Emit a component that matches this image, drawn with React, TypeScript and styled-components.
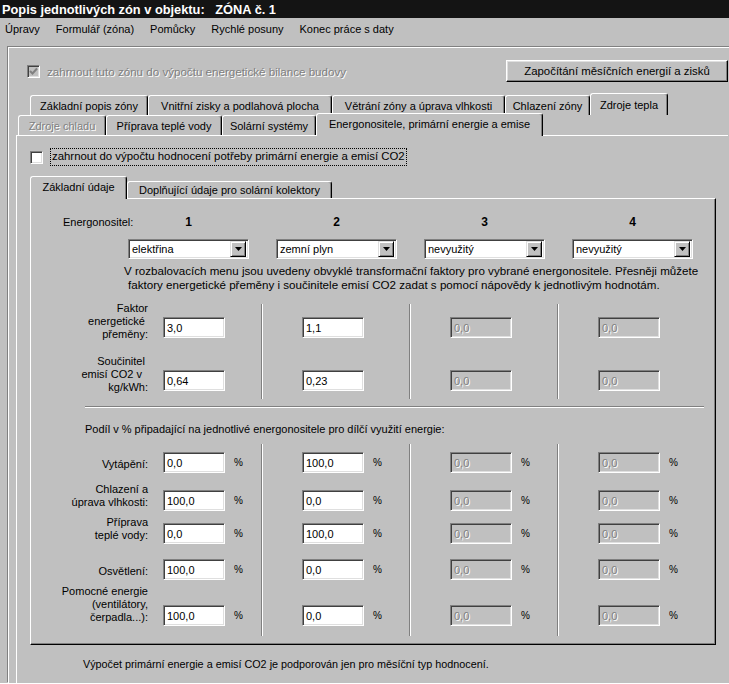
import React from "react";
import styled, { createGlobalStyle, css } from "styled-components";

const GlobalStyle = createGlobalStyle`
  html, body {
    margin: 0;
    padding: 0;
    background: #c0c0c0;
  }
  body {
    font-family: "Liberation Sans", Arial, sans-serif;
    font-size: 11px;
    color: #000;
  }
`;

const sunken = css`
  border: 1px solid;
  border-color: #808080 #ffffff #ffffff #808080;
  box-shadow: inset 1px 1px 0 #404040, inset -1px -1px 0 #dfdfdf;
`;

const raised = css`
  border: 1px solid;
  border-color: #ffffff #000000 #000000 #ffffff;
  box-shadow: inset -1px -1px 0 #808080, inset 1px 1px 0 #dfdfdf;
`;

const disabledText = css`
  color: #808080;
  text-shadow: 1px 1px 0 #ffffff;
`;

const Window = styled.div`
  width: 729px;
  height: 684px;
  overflow: hidden;
  background: #c0c0c0;
  box-shadow: inset 0 -1px 0 #fff;
  display: flex;
  flex-direction: column;
`;

const TitleBar = styled.div`
  height: 18px;
  flex-shrink: 0;
  background: #141414;
  color: #fff;
  font-weight: bold;
  font-size: 12.8px;
  display: flex;
  align-items: center;
  padding-left: 2px;
  white-space: pre;
`;

const MenuBar = styled.div`
  height: 21px;
  flex-shrink: 0;
  display: flex;
  align-items: center;
  gap: 16px;
  padding-left: 5px;
`;

const Frame = styled.div`
  flex: 1;
  margin: 8px -12px 1px 8px;
  border-top: 1px solid #fff;
  border-left: 1px solid #fff;
  box-shadow: -1px -1px 0 #808080;
  padding: 12px 13px 0 7px;
  display: flex;
  flex-direction: column;
`;

const TopRow = styled.div`
  height: 22px;
  display: flex;
  align-items: center;
  padding-left: 11px;
`;

const CheckRow = styled.label<{ $disabled?: boolean; $size?: number }>`
  display: flex;
  align-items: center;
  gap: 7px;
  font-size: ${(p) => p.$size ?? 11}px;
  ${(p) => p.$disabled && disabledText}
`;

const Box = styled.span<{ $disabled?: boolean }>`
  box-sizing: border-box;
  width: 13px;
  height: 13px;
  ${sunken};
  background: ${(p) => (p.$disabled ? "#c0c0c0" : "#fff")};
  display: flex;
  align-items: center;
  justify-content: center;
  text-shadow: none;
`;

const FocusText = styled.span`
  border: 1px dotted #000;
  padding: 1px 1px 2px;
  line-height: 13px;
`;

const Button = styled.div`
  box-sizing: border-box;
  margin-left: auto;
  width: 222px;
  height: 22px;
  ${raised};
  display: flex;
  align-items: center;
  justify-content: center;
  font-size: 11.4px;
`;

const TabStrip = styled.div<{ $gap?: number }>`
  margin-top: ${(p) => p.$gap ?? 0}px;
  display: flex;
  flex-direction: column;
`;

const TabRow = styled.div<{ $indent: number; $h: number }>`
  display: flex;
  align-items: flex-end;
  height: ${(p) => p.$h}px;
  padding-left: ${(p) => p.$indent}px;
`;

const Tab = styled.div<{ $w: number; $h: number; $active?: boolean; $disabled?: boolean }>`
  box-sizing: border-box;
  width: ${(p) => p.$w}px;
  height: ${(p) => p.$h}px;
  margin-bottom: ${(p) => (p.$active ? -1 : 0)}px;
  border-top: 1px solid #fff;
  border-left: 1px solid #fff;
  border-right: 1px solid #000;
  box-shadow: inset -1px 0 0 #808080;
  border-radius: 3px 3px 0 0;
  background: #c0c0c0;
  display: flex;
  align-items: center;
  justify-content: center;
  white-space: nowrap;
  position: relative;
  z-index: ${(p) => (p.$active ? 2 : 1)};
  padding-bottom: ${(p) => (p.$active ? 2 : 0)}px;
  ${(p) => p.$disabled && disabledText}
`;

const TabPanel = styled.div`
  flex: 1;
  border-top: 1px solid #fff;
  border-left: 1px solid #fff;
  padding: 12px 0 0 13px;
  display: flex;
  flex-direction: column;
`;

const InnerPanel = styled.div`
  box-sizing: border-box;
  width: 686px;
  border-top: 1px solid #fff;
  border-left: 1px solid #fff;
  border-right: 1px solid #000;
  border-bottom: 1px solid #000;
  box-shadow: inset -1px -1px 0 #808080;
  padding: 17px 0 18px;
  display: flex;
  flex-direction: column;
`;

const ColumnsRow = styled.div<{ $gap?: number }>`
  display: grid;
  grid-template-columns: 70px repeat(4, 121px);
  column-gap: 27px;
  margin-top: ${(p) => p.$gap ?? 0}px;
  align-items: center;
`;

const RowCaption = styled.div`
  padding-left: 32px;
  white-space: nowrap;
  line-height: 13px;
`;

const ColumnHead = styled.div`
  text-align: center;
  font-weight: bold;
  font-size: 12px;
  line-height: 13px;
`;

const Select = styled.div`
  box-sizing: border-box;
  height: 20px;
  ${sunken};
  background: #fff;
  display: flex;
  align-items: center;
  padding: 2px;
`;

const SelectText = styled.span`
  flex: 1;
  padding-left: 1px;
`;

const SelectButton = styled.span`
  box-sizing: border-box;
  width: 16px;
  height: 16px;
  background: #c0c0c0;
  border: 1px solid;
  border-color: #dfdfdf #000 #000 #dfdfdf;
  box-shadow: inset 1px 1px 0 #fff, inset -1px -1px 0 #808080;
  display: flex;
  align-items: center;
  justify-content: center;
`;

const Note = styled.div<{ $indent: number; $gap: number; $size?: number }>`
  padding-left: ${(p) => p.$indent}px;
  margin-top: ${(p) => p.$gap}px;
  font-size: ${(p) => p.$size ?? 11}px;
  line-height: 14px;
  white-space: nowrap;
`;

const NoteLine = styled.div<{ $indent?: number }>`
  padding-left: ${(p) => p.$indent ?? 0}px;
`;

const ValueGrid = styled.div<{ $rows: string; $gap: number }>`
  display: grid;
  grid-template-columns: 132px 98px 2px 146px 2px 146px 2px 146px;
  grid-template-rows: ${(p) => p.$rows};
  align-items: end;
  margin-top: ${(p) => p.$gap}px;
`;

const RowLabel = styled.div<{ $row: number; $drop: number }>`
  grid-column: 1;
  grid-row: ${(p) => p.$row};
  text-align: right;
  padding-right: 15px;
  line-height: 13px;
  margin-bottom: ${(p) => p.$drop}px;
`;

const ValueCell = styled.div<{ $row: number; $col: number }>`
  grid-column: ${(p) => p.$col};
  grid-row: ${(p) => p.$row};
  display: flex;
  align-items: center;
  padding-left: ${(p) => (p.$col === 2 ? 0 : 39)}px;
`;

const Field = styled.div<{ $disabled?: boolean }>`
  box-sizing: border-box;
  width: 62px;
  height: 21px;
  ${sunken};
  background: ${(p) => (p.$disabled ? "#c0c0c0" : "#fff")};
  padding: 0 0 0 3px;
  display: flex;
  align-items: center;
  ${(p) => p.$disabled && disabledText}
`;

const Unit = styled.span`
  margin-left: 9px;
  font-size: 10px;
`;

const VSep = styled.div<{ $col: number; $span: number; $top: number; $bottom: number }>`
  grid-column: ${(p) => p.$col};
  grid-row: 1 / span ${(p) => p.$span};
  align-self: stretch;
  border-left: 1px solid #808080;
  border-right: 1px solid #fff;
  margin: ${(p) => p.$top}px 0 ${(p) => -p.$bottom}px;
  width: 0;
`;

const HSep = styled.div`
  margin: 15px 11px 0 54px;
  border-top: 1px solid #808080;
  border-bottom: 1px solid #fff;
`;

const Arrow = () => (
  <svg width="7" height="4" viewBox="0 0 7 4">
    <polygon points="0,0 7,0 3.5,4" fill="#000" />
  </svg>
);

const Tick = () => (
  <svg width="9" height="9" viewBox="0 0 9 9">
    <polyline points="1,4 3.5,6.5 8,1.5" fill="none" stroke="#808080" strokeWidth="2" />
  </svg>
);

type Row = { label: string[]; values: string[] };

const factorRows: Row[] = [
  { label: ["Faktor", "energetické\u00a0", "přeměny:"], values: ["3,0", "1,1", "0,0", "0,0"] },
  { label: ["Součinitel\u00a0", "emisí CO2 v\u00a0\u00a0", "kg/kWh:"], values: ["0,64", "0,23", "0,0", "0,0"] },
];

const percentRows: Row[] = [
  { label: ["Vytápění:"], values: ["0,0", "100,0", "0,0", "0,0"] },
  { label: ["Chlazení a", "úprava vlhkosti:"], values: ["100,0", "0,0", "0,0", "0,0"] },
  { label: ["Příprava", "teplé vody:"], values: ["0,0", "100,0", "0,0", "0,0"] },
  { label: ["Osvětlení:"], values: ["100,0", "0,0", "0,0", "0,0"] },
  { label: ["Pomocné energie", "(ventilátory,", "čerpadla...):"], values: ["100,0", "0,0", "0,0", "0,0"] },
];

const carriers = ["elektřina", "zemní plyn", "nevyužitý", "nevyužitý"];

const ValueRows = ({ rows, unit, drop }: { rows: Row[]; unit?: string; drop: number }) => (
  <>
    {rows.map((r, i) => (
      <React.Fragment key={i}>
        <RowLabel $row={i + 1} $drop={drop}>
          {r.label.map((l, j) => (
            <div key={j}>{l}</div>
          ))}
        </RowLabel>
        {r.values.map((v, c) => (
          <ValueCell key={c} $row={i + 1} $col={2 + c * 2}>
            <Field $disabled={c > 1}>{v}</Field>
            {unit && <Unit>{unit}</Unit>}
          </ValueCell>
        ))}
      </React.Fragment>
    ))}
  </>
);

const App = () => {
  return (
    <>
      <GlobalStyle />
      <Window>
        <TitleBar>{"Popis jednotlivých zón v objektu:   ZÓNA č. 1"}</TitleBar>
        <MenuBar>
          <span>Úpravy</span>
          <span>Formulář (zóna)</span>
          <span>Pomůcky</span>
          <span>Rychlé posuny</span>
          <span>Konec práce s daty</span>
        </MenuBar>

        <Frame>
          <TopRow>
            <CheckRow $disabled $size={11.6}>
              <Box $disabled>
                <Tick />
              </Box>
              zahrnout tuto zónu do výpočtu energetické bilance budovy
            </CheckRow>
            <Button>Započítání měsíčních energií a zisků</Button>
          </TopRow>

          <TabStrip $gap={13}>
            <TabRow $indent={14} $h={20}>
              <Tab $w={118} $h={20}>Základní popis zóny</Tab>
              <Tab $w={184} $h={20}>Vnitřní zisky a podlahová plocha</Tab>
              <Tab $w={173} $h={20}>Větrání zóny a úprava vlhkosti</Tab>
              <Tab $w={85} $h={20}>Chlazení zóny</Tab>
              <Tab $w={78} $h={22}>Zdroje tepla</Tab>
            </TabRow>
            <TabRow $indent={2} $h={20}>
              <Tab $w={88} $h={20} $disabled>
                Zdroje chladu
              </Tab>
              <Tab $w={116} $h={20}>Příprava teplé vody</Tab>
              <Tab $w={94} $h={20}>Solární systémy</Tab>
              <Tab $w={227} $h={23} $active>
                Energonositele, primární energie a emise
              </Tab>
            </TabRow>
          </TabStrip>

          <TabPanel>
            <CheckRow $size={11.4}>
              <Box />
              <FocusText>zahrnout do výpočtu hodnocení potřeby primární energie a emisí CO2</FocusText>
            </CheckRow>

            <TabStrip $gap={10}>
              <TabRow $indent={0} $h={22}>
                <Tab $w={97} $h={23} $active>
                  Základní údaje
                </Tab>
                <Tab $w={205} $h={17}>Doplňující údaje pro solární kolektory</Tab>
              </TabRow>
            </TabStrip>

            <InnerPanel>
              <ColumnsRow>
                <RowCaption>Energonositel:</RowCaption>
                {[1, 2, 3, 4].map((n) => (
                  <ColumnHead key={n}>{n}</ColumnHead>
                ))}
              </ColumnsRow>
              <ColumnsRow $gap={10}>
                <span />
                {carriers.map((c, i) => (
                  <Select key={i}>
                    <SelectText>{c}</SelectText>
                    <SelectButton>
                      <Arrow />
                    </SelectButton>
                  </Select>
                ))}
              </ColumnsRow>
              <Note $indent={93} $gap={5} $size={11.6}>
                <NoteLine>
                  V rozbalovacích menu jsou uvedeny obvyklé transformační faktory pro vybrané energonositele. Přesněji
                  můžete
                </NoteLine>
                <NoteLine $indent={4}>
                  faktory energetické přeměny i součinitele emisí CO2 zadat s pomocí nápovědy k jednotlivým hodnotám.
                </NoteLine>
              </Note>

              <ValueGrid $rows="42px 53px" $gap={4}>
                {[3, 5, 7].map((c) => (
                  <VSep key={c} $col={c} $span={2} $top={8} $bottom={8} />
                ))}
                <ValueRows rows={factorRows} drop={-3} />
              </ValueGrid>

              <HSep />
              <Note $indent={54} $gap={14}>
                Podíl v % připadající na jednotlivé energonositele pro dílčí využití energie:
              </Note>

              <ValueGrid $rows="29px 38px 33px 36px 46px" $gap={8}>
                {[3, 5, 7].map((c) => (
                  <VSep key={c} $col={c} $span={5} $top={0} $bottom={10} />
                ))}
                <ValueRows rows={percentRows} unit="%" drop={2} />
              </ValueGrid>
            </InnerPanel>

            <Note $indent={53} $gap={12} $size={10.8}>
              Výpočet primární energie a emisí CO2 je podporován jen pro měsíční typ hodnocení.
            </Note>
          </TabPanel>
        </Frame>
      </Window>
    </>
  );
};

export default App;
